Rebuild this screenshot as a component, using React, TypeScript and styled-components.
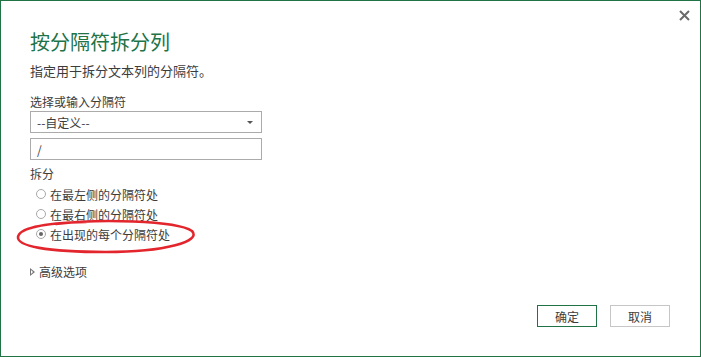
import React from "react";
import styled, { createGlobalStyle } from "styled-components";

const Global = createGlobalStyle`
  html, body { margin: 0; padding: 0; background: #fff; }
  body { font-family: "Noto Sans CJK SC", "Noto Sans", sans-serif; }
  * { box-sizing: border-box; }
`;

const Dialog = styled.div`
  position: relative;
  width: 701px;
  height: 357px;
  border: 1px solid #217346;
  background: #fff;
  padding: 29px 30px 29px 29px;
  display: flex;
  flex-direction: column;
  color: #444;
`;

const CloseButton = styled.button`
  position: absolute;
  top: 7px;
  right: 9px;
  width: 14px;
  height: 14px;
  padding: 0;
  border: none;
  background: transparent;
  display: flex;
  align-items: center;
  justify-content: center;
`;

const Title = styled.h1`
  margin: 0;
  font-size: 20px;
  line-height: 24px;
  font-weight: 400;
  color: #217346;
`;

const Subtitle = styled.p`
  margin: 8px 0 0;
  font-size: 13px;
  line-height: 18px;
  color: #3c3c3c;
`;

const Label = styled.div<{ $mt: number }>`
  margin-top: ${(p) => p.$mt}px;
  font-size: 12px;
  line-height: 16px;
  color: #3c3c3c;
`;

const Field = styled.div<{ $mt: number }>`
  margin-top: ${(p) => p.$mt}px;
  width: 232px;
  height: 22px;
  border: 1px solid #ababab;
  display: flex;
  align-items: center;
  justify-content: space-between;
  padding: 0 8px 0 6px;
  font-size: 12px;
  color: #3c3c3c;
  font-family: "Noto Sans CJK SC", "Noto Sans", sans-serif;
`;

const Arrow = styled.span`
  width: 0;
  height: 0;
  border-left: 3px solid transparent;
  border-right: 3px solid transparent;
  border-top: 3px solid #555;
`;

const RadioGroup = styled.div`
  margin-top: 2px;
  position: relative;
  display: flex;
  flex-direction: column;
`;

const RadioRow = styled.label`
  height: 20px;
  display: flex;
  align-items: center;
  gap: 4px;
  padding-left: 6px;
  font-size: 12px;
  color: #3c3c3c;
`;

const Circle = styled.span<{ $checked?: boolean }>`
  width: 10px;
  height: 10px;
  border-radius: 50%;
  border: 1px solid #a8a8a8;
  background: #fff;
  display: flex;
  align-items: center;
  justify-content: center;
  &::after {
    content: "";
    width: 4px;
    height: 4px;
    border-radius: 50%;
    background: ${(p) => (p.$checked ? "#666" : "transparent")};
  }
`;

const Annotation = styled.svg`
  position: absolute;
  left: -14px;
  top: 36px;
  overflow: visible;
  pointer-events: none;
`;

const Advanced = styled.div`
  margin-top: 20px;
  display: flex;
  align-items: center;
  gap: 4px;
  font-size: 12px;
  line-height: 16px;
  color: #3c3c3c;
`;

const Caret = styled.span`
  width: 0;
  height: 0;
  border-top: 4px solid transparent;
  border-bottom: 4px solid transparent;
  border-left: 5px solid #777;
  position: relative;
  &::after {
    content: "";
    position: absolute;
    left: -4px;
    top: -2px;
    border-top: 2px solid transparent;
    border-bottom: 2px solid transparent;
    border-left: 2.5px solid #fff;
  }
`;

const Footer = styled.div`
  margin-top: auto;
  display: flex;
  justify-content: flex-end;
  gap: 13px;
`;

const Button = styled.button<{ $primary?: boolean }>`
  width: 60px;
  height: 22px;
  padding: 0;
  background: #fff;
  border: 1px solid ${(p) => (p.$primary ? "#217346" : "#c6c6c6")};
  font-family: "Noto Sans CJK SC", "Noto Sans", sans-serif;
  font-size: 12px;
  color: #3c3c3c;
`;

export default function App() {
  return (
    <>
      <Global />
      <Dialog>
        <CloseButton aria-label="close">
          <svg width="11" height="11" viewBox="0 0 11 11">
            <path d="M1 1 L10 10 M10 1 L1 10" stroke="#6a6a6a" strokeWidth="2" />
          </svg>
        </CloseButton>
        <Title>按分隔符拆分列</Title>
        <Subtitle>指定用于拆分文本列的分隔符。</Subtitle>
        <Label $mt={14}>选择或输入分隔符</Label>
        <Field $mt={1}>
          <span>--自定义--</span>
          <Arrow />
        </Field>
        <Field $mt={5}>
          <span>/</span>
        </Field>
        <Label $mt={6}>拆分</Label>
        <RadioGroup>
          <RadioRow>
            <Circle />
            在最左侧的分隔符处
          </RadioRow>
          <RadioRow>
            <Circle />
            在最右侧的分隔符处
          </RadioRow>
          <RadioRow>
            <Circle $checked />
            在出现的每个分隔符处
          </RadioRow>
          <Annotation width="180" height="34" viewBox="0 0 180 34">
            <path
              d="M40 4 C 80 -1, 160 0, 176 11 C 186 21, 150 32, 90 32 C 30 32, 1 26, 2 17 C 3 8, 28 3, 70 2"
              fill="none"
              stroke="#e3262d"
              strokeWidth="2.6"
              strokeLinecap="round"
            />
          </Annotation>
        </RadioGroup>
        <Advanced>
          <Caret />
          高级选项
        </Advanced>
        <Footer>
          <Button $primary>确定</Button>
          <Button>取消</Button>
        </Footer>
      </Dialog>
    </>
  );
}
